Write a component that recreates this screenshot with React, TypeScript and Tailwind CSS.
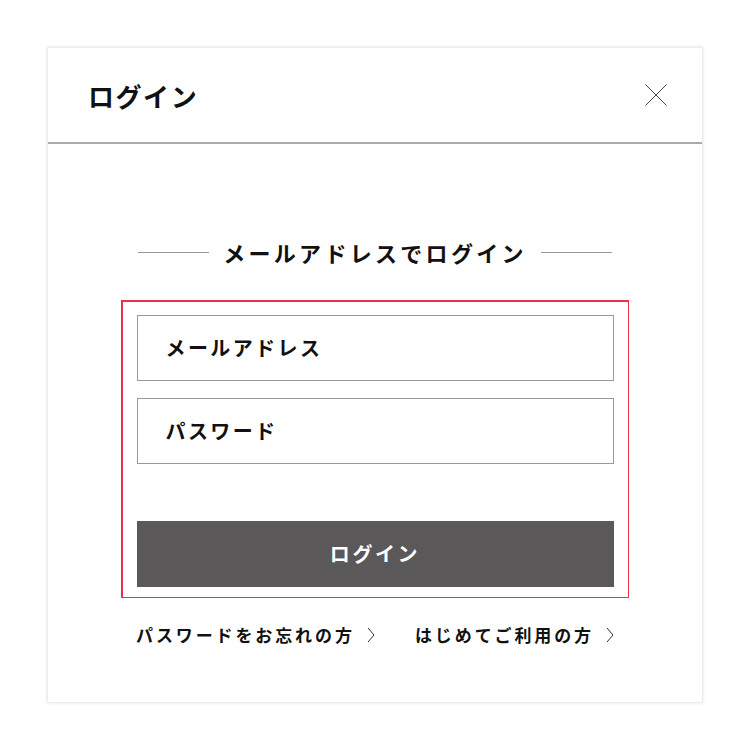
const font = { fontFamily: '"Noto Sans CJK JP", "Noto Sans", sans-serif' }

function Field({ label }: { label: string }) {
  return (
    <div className="h-[66px] border border-[#999] flex items-center pl-[28px]">
      <span className="text-[20px] font-bold text-[#111] tracking-[0.12em]">{label}</span>
    </div>
  )
}

function TextLink({ label }: { label: string }) {
  return (
    <a className="flex items-center text-[17px] font-bold text-[#111] tracking-[0.17em]">
      {label}
      <svg width="8" height="16" viewBox="0 0 8 16" fill="none" className="ml-[12px]">
        <path d="M1 1 L7 8 L1 15" stroke="#333" strokeWidth="1" />
      </svg>
    </a>
  )
}

export default function App() {
  return (
    <div className="w-[750px] h-[750px] bg-white p-[48px]" style={font}>
      <div className="w-[654px] h-[654px] bg-white shadow-[0_0_3px_1px_rgba(0,0,0,0.12)] flex flex-col">
        {/* Header */}
        <div className="h-[96px] flex items-center justify-between pl-[40px] pr-[35px] border-b-2 border-[#aaa]">
          <h1 className="text-[26px] font-bold text-[#111] tracking-[0.06em]">ログイン</h1>
          <svg width="22" height="22" viewBox="0 0 22 22" fill="none">
            <path d="M0.5 0.5 L21.5 21.5 M21.5 0.5 L0.5 21.5" stroke="#444" strokeWidth="1" />
          </svg>
        </div>

        {/* Body */}
        <div className="flex flex-col items-center pt-[92px]">
          <div className="flex items-center w-[474px] gap-[14px]">
            <div className="flex-1 h-px bg-[#999]" />
            <h2 className="text-[22px] font-bold text-[#111] tracking-[0.15em]">メールアドレスでログイン</h2>
            <div className="flex-1 h-px bg-[#999]" />
          </div>

          {/* red frame */}
          <div className="mt-[31px] w-[508px] bg-[#e6334b] p-[1.5px]">
            <div className="bg-white px-[14px] pt-[13px] pb-[10px]">
              <div className="flex flex-col gap-[17px]">
                <Field label="メールアドレス" />
                <Field label="パスワード" />
              </div>
              <button className="mt-[57px] w-full h-[66px] bg-[#5a5859] text-white text-[20px] font-bold tracking-[0.13em]">
                ログイン
              </button>
            </div>
          </div>

          <div className="mt-[24px] w-[478px] flex items-center justify-between">
            <TextLink label="パスワードをお忘れの方" />
            <TextLink label="はじめてご利用の方" />
          </div>
        </div>
      </div>
    </div>
  )
}
